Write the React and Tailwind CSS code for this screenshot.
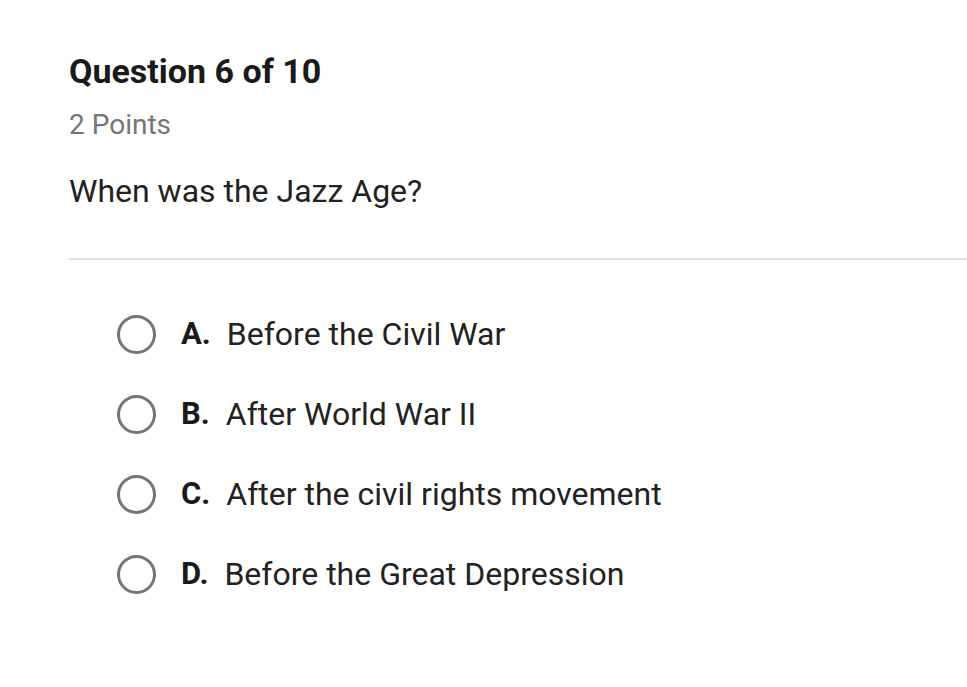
const OPTIONS = [
  { key: "A.", text: "Before the Civil War" },
  { key: "B.", text: "After World War II" },
  { key: "C.", text: "After the civil rights movement" },
  { key: "D.", text: "Before the Great Depression" },
];

function Radio() {
  return <span className="h-[39px] w-[39px] shrink-0 rounded-full border-[3px] border-[#757575]" />;
}

export default function App() {
  return (
    <div className="min-h-[687px] w-[967px] overflow-hidden bg-white pl-[69px] pt-[51px] font-['Roboto',sans-serif]">
      <h1 className="text-[34px] font-bold leading-[40px] text-[#1a1a1a]">Question 6 of 10</h1>
      <p className="mt-[17px] text-[28px] leading-[34px] text-[#757575]">2 Points</p>
      <p className="mt-[29px] text-[32px] leading-[40px] text-[#222]">When was the Jazz Age?</p>
      <div className="mt-[47px] h-[2px] bg-[#e0e0e0]" />
      <ul className="mt-[54px] flex flex-col gap-[40px] pl-[48px]">
        {OPTIONS.map((o) => (
          <li key={o.key} className="flex h-[40px] items-center">
            <Radio />
            <span className="ml-[25px] text-[31px] font-bold text-[#1a1a1a]">{o.key}</span>
            <span className="ml-[16px] text-[32px] text-[#222]">{o.text}</span>
          </li>
        ))}
      </ul>
    </div>
  );
}
